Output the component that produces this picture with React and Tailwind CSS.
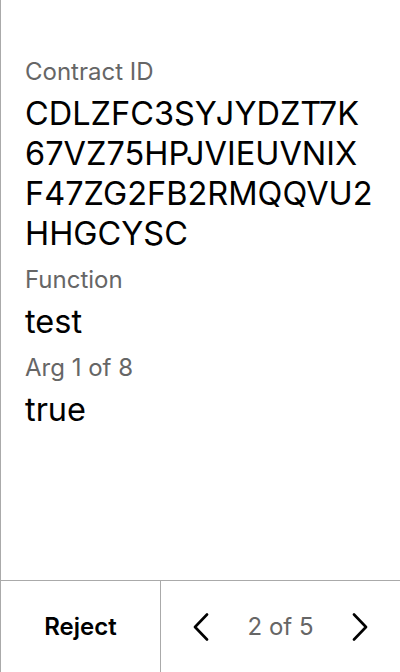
const ChevronLeft = () => (
  <svg width="16" height="28" viewBox="0 0 16 28" fill="none">
    <path d="M14 1.5 2 14l12 12.5" stroke="#000" strokeWidth="2.6" strokeLinecap="round" strokeLinejoin="round" />
  </svg>
);

const ChevronRight = () => (
  <svg width="16" height="28" viewBox="0 0 16 28" fill="none">
    <path d="M2 1.5 14 14 2 26.5" stroke="#000" strokeWidth="2.6" strokeLinecap="round" strokeLinejoin="round" />
  </svg>
);

const Field = ({ label, children, first }) => (
  <div className={first ? '' : 'mt-3'}>
    <div className="mb-2 text-[24px] leading-[28px] text-[#666]">{label}</div>
    <div className="text-[32.5px] leading-[40px] text-black break-all">{children}</div>
  </div>
);

const App = () => {
  return (
    <div className="flex h-[672px] w-[400px] flex-col border-l border-[#aaa] bg-white font-['Inter',sans-serif]">
      <div className="flex-1 px-6 pt-[58px]">
        <Field label="Contract ID" first>
          CDLZFC3SYJYDZT7K
          <br />
          67VZ75HPJVIEUVNIX
          <br />
          F47ZG2FB2RMQQVU2
          <br />
          HHGCYSC
        </Field>
        <Field label="Function">test</Field>
        <Field label="Arg 1 of 8">true</Field>
      </div>
      <div className="flex h-[92px] border-t border-[#aaa]">
        <button className="flex w-[159px] items-center justify-center text-[24px] font-semibold text-black">
          Reject
        </button>
        <div className="flex flex-1 items-center justify-between border-l border-[#aaa] px-7">
          <button className="flex h-7 w-6 items-center justify-center">
            <ChevronLeft />
          </button>
          <span className="text-[24px] text-[#666]">2 of 5</span>
          <button className="flex h-7 w-6 items-center justify-center">
            <ChevronRight />
          </button>
        </div>
      </div>
    </div>
  );
};

export default App;
